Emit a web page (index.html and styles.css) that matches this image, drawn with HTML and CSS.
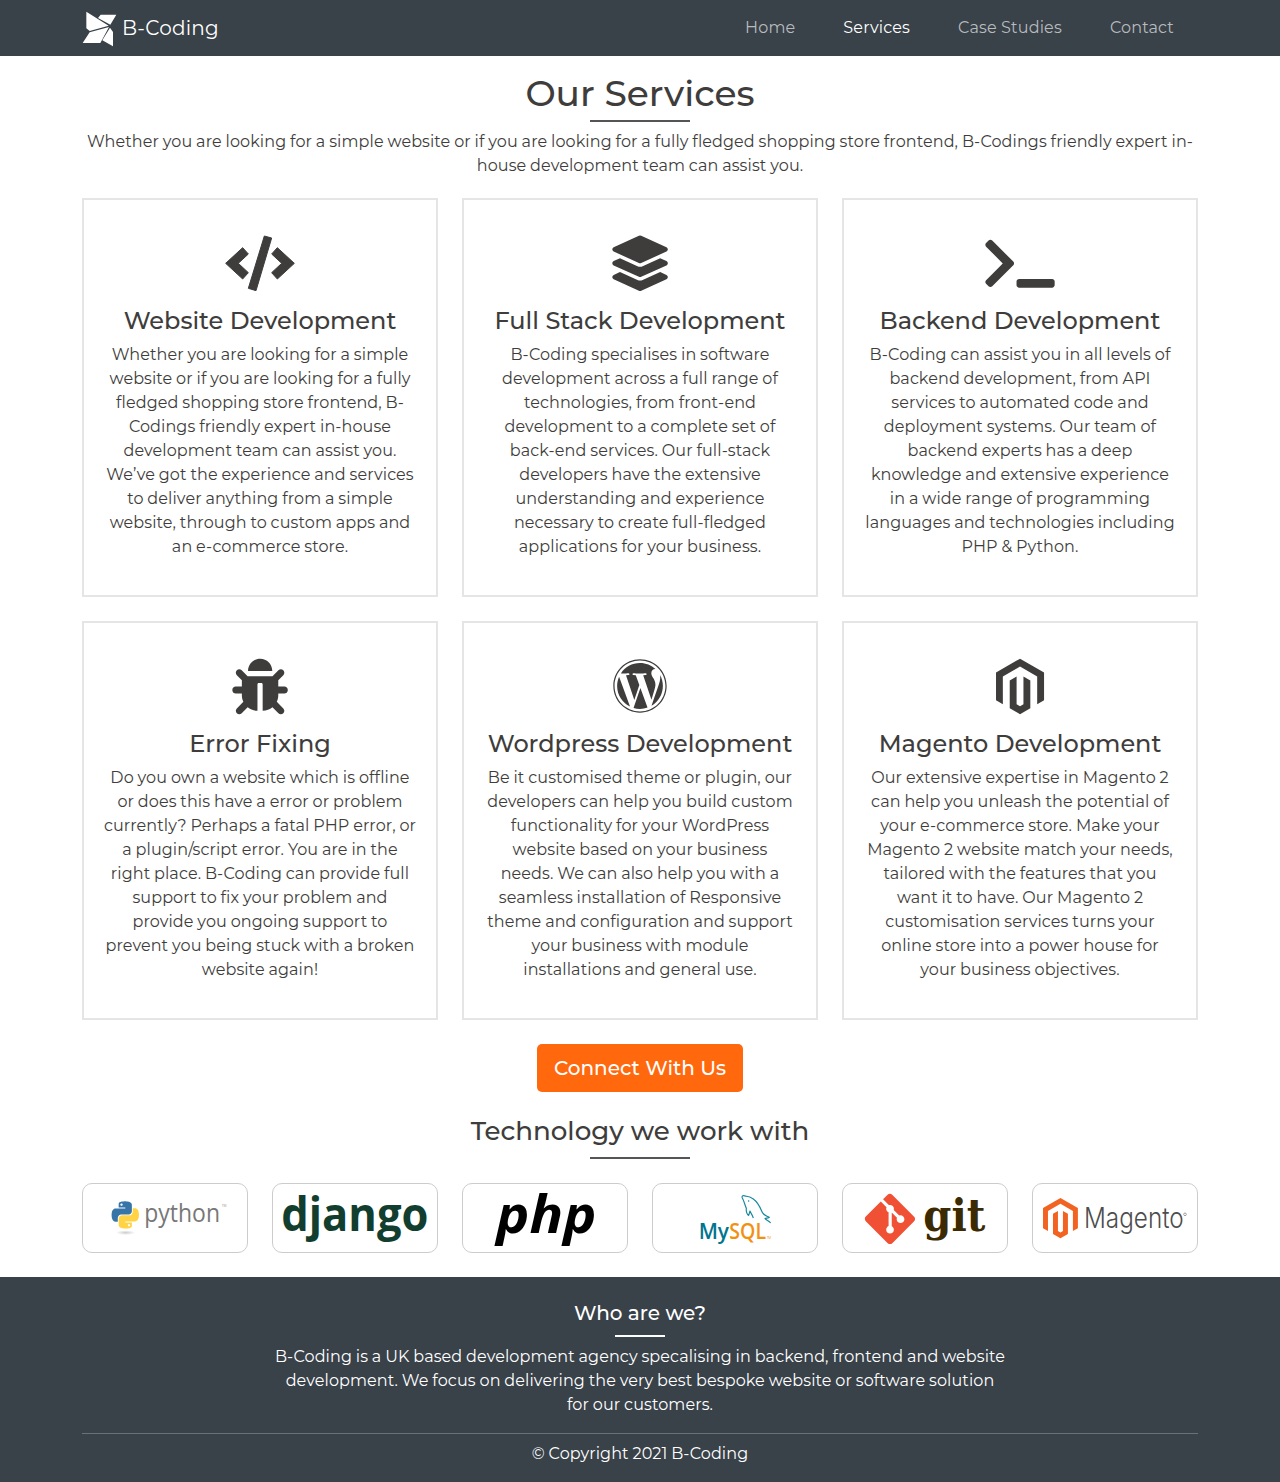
FILE: index.html
```html
<!DOCTYPE html>
<html lang="en">
<head>
<meta charset="utf-8">
<title>B-Coding | Services</title>
<link rel="stylesheet" href="styles.css">
</head>
<body>
<header class="navbar">
  <div class="container navbar-inner">
    <a class="brand">
      <svg class="brand-mark" viewBox="36 33 105 108"><path d="M49 35L116 77 59 93 49 85zM84 54L92 44H139L121 74zM38 129L59 97 117 81 91 129zM120 83L129 96V139L97 121z"/></svg>
      <span class="brand-name">B-Coding</span>
    </a>
    <nav class="menu"><a>Home</a><a class="active">Services</a><a>Case Studies</a><a>Contact</a></nav>
  </div>
</header>

<main class="container">
  <h1 class="page-title">Our Services</h1>
  <div class="rule"></div>
  <p class="intro">Whether you are looking for a simple website or if you are looking for a fully fledged shopping store frontend, B-Codings friendly expert in-<br>house development team can assist you.</p>

  <section class="services">
    <article class="card">
      <svg class="icon" viewBox="0 0 300 240"><path stroke="#3e3d3c" stroke-width="3" stroke-linejoin="round" d="M47 130L98 83 115 102 85 130 115 158 98 177zM253 130L202 83 185 102 215 130 185 158 202 177zM163 48L185 54 138 212 115 205z"/></svg>
      <h2>Website Development</h2>
      <p>Whether you are looking for a simple<br>website or if you are looking for a fully<br>fledged shopping store frontend, B-<br>Codings friendly expert in-house<br>development team can assist you.<br>We’ve got the experience and services<br>to deliver anything from a simple<br>website, through to custom apps and<br>an e-commerce store.</p>
    </article>
    <article class="card">
      <svg class="icon" viewBox="0 0 300 240"><path transform="translate(67 46.5) scale(.325)" d="M12.41 148.02l232.94 105.67c6.8 3.09 14.49 3.09 21.29 0l232.94-105.67c16.55-7.51 16.55-32.52 0-40.03L266.65 2.31a25.607 25.607 0 0 0-21.29 0L12.41 107.98c-16.55 7.51-16.55 32.53 0 40.04zm487.18 88.28l-58.09-26.33-161.64 73.27c-7.56 3.43-15.59 5.17-23.86 5.17s-16.29-1.74-23.86-5.17L70.51 209.97l-58.1 26.33c-16.55 7.5-16.55 32.5 0 40l232.94 105.59c6.8 3.08 14.49 3.08 21.29 0L499.59 276.3c16.55-7.5 16.55-32.5 0-40zm0 127.8l-57.87-26.23-161.86 73.37c-7.56 3.43-15.59 5.17-23.86 5.17s-16.29-1.74-23.86-5.17L70.29 337.87 12.41 364.1c-16.55 7.5-16.55 32.5 0 40l232.94 105.59c6.8 3.08 14.49 3.08 21.29 0L499.59 404.1c16.55-7.5 16.55-32.5 0-40z"/></svg>
      <h2>Full Stack Development</h2>
      <p>B-Coding specialises in software<br>development across a full range of<br>technologies, from front-end<br>development to a complete set of<br>back-end services. Our full-stack<br>developers have the extensive<br>understanding and experience<br>necessary to create full-fledged<br>applications for your business.</p>
    </article>
    <article class="card">
      <svg class="icon" viewBox="0 0 300 240"><path transform="translate(46 47) scale(.325)" d="M257.981 272.971L63.638 467.314c-9.373 9.373-24.569 9.373-33.941 0L7.029 444.647c-9.357-9.357-9.375-24.522-.04-33.901L161.011 256 6.99 101.255c-9.335-9.379-9.317-24.544.04-33.901l22.667-22.667c9.373-9.373 24.569-9.373 33.941 0L257.981 239.03c9.373 9.372 9.373 24.568 0 33.941zM640 456v-32c0-13.255-10.745-24-24-24H312c-13.255 0-24 10.745-24 24v32c0 13.255 10.745 24 24 24h304c13.255 0 24-10.745 24-24z"/></svg>
      <h2>Backend Development</h2>
      <p>B-Coding can assist you in all levels of<br>backend development, from API<br>services to automated code and<br>deployment systems. Our team of<br>backend experts has a deep<br>knowledge and extensive experience<br>in a wide range of programming<br>languages and technologies including<br>PHP &amp; Python.</p>
    </article>
    <article class="card">
      <svg class="icon" viewBox="0 -6 300 240"><path transform="translate(67 41.5) scale(.325)" d="M511.988 288.9c-.478 17.43-15.217 31.1-32.653 31.1H424v16c0 21.864-4.882 42.584-13.6 61.145l60.228 60.228c12.496 12.497 12.496 32.758 0 45.255-12.498 12.497-32.759 12.496-45.256 0l-54.736-54.736C345.886 467.965 314.351 480 280 480V236c0-6.627-5.373-12-12-12h-24c-6.627 0-12 5.373-12 12v244c-34.351 0-65.886-12.035-90.636-32.108l-54.736 54.736c-12.498 12.497-32.759 12.496-45.256 0-12.496-12.497-12.496-32.758 0-45.255l60.228-60.228C92.882 378.584 88 357.864 88 336v-16H32.666C15.23 320 .491 306.33.013 288.9-.484 270.816 14.028 256 32 256h56v-58.745l-46.628-46.628c-12.496-12.497-12.496-32.758 0-45.255 12.498-12.497 32.758-12.497 45.256 0L141.255 160h229.489l54.627-54.627c12.498-12.497 32.758-12.497 45.256 0 12.496 12.497 12.496 32.758 0 45.255L424 197.255V256h56c17.972 0 32.484 14.816 31.988 32.9zM257 0c-61.856 0-112 50.144-112 112h224C369 50.144 318.856 0 257 0z"/></svg>
      <h2>Error Fixing</h2>
      <p>Do you own a website which is offline<br>or does this have a error or problem<br>currently? Perhaps a fatal PHP error, or<br>a plugin/script error. You are in the<br>right place. B-Coding can provide full<br>support to fix your problem and<br>provide you ongoing support to<br>prevent you being stuck with a broken<br>website again!</p>
    </article>
    <article class="card">
      <svg class="icon" viewBox="0 -6 300 240"><path transform="translate(67.4 40.4) scale(.3226)" d="M61.7 169.4l101.5 278C92.2 413 43.3 340.2 43.3 256c0-30.9 6.6-60.1 18.4-86.6zm337.9 75.9c0-26.3-9.4-44.5-17.5-58.7-10.8-17.5-20.9-32.4-20.9-49.9 0-19.6 14.8-37.8 35.7-37.8.9 0 1.8.1 2.8.2-37.9-34.7-88.3-55.9-143.7-55.9-74.3 0-139.7 38.1-177.8 95.9 5 .2 9.7.3 13.7.3 22.2 0 56.7-2.7 56.7-2.7 11.5-.7 12.8 16.2 1.4 17.5 0 0-11.5 1.3-24.3 2l77.5 230.4L249.8 247l-33.1-90.8c-11.5-.7-22.3-2-22.3-2-11.5-.7-10.1-18.2 1.3-17.5 0 0 35.1 2.7 56 2.7 22.2 0 56.7-2.7 56.7-2.7 11.5-.7 12.8 16.2 1.4 17.5 0 0-11.5 1.3-24.3 2l76.9 228.7 21.2-70.9c9-29.4 16-50.5 16-68.7zm-139.9 29.3l-63.8 185.5c19.1 5.6 39.2 8.7 60.1 8.7 24.8 0 48.5-4.3 70.6-12.1-.6-.9-1.1-1.9-1.5-2.9l-65.4-179.2zm183-120.7c.9 6.8 1.4 14 1.4 21.9 0 21.6-4 45.8-16.2 76.2l-65 187.9C426.2 403 468.7 334.5 468.7 256c0-37-9.4-71.8-26-102.1zM504 256c0 136.8-111.3 248-248 248C119.2 504 8 392.7 8 256 8 119.2 119.2 8 256 8c136.7 0 248 111.2 248 248zm-11.4 0c0-130.5-106.2-236.6-236.6-236.6C125.5 19.4 19.4 125.5 19.4 256S125.6 492.6 256 492.6c130.5 0 236.6-106.1 236.6-236.6z"/></svg>
      <h2>Wordpress Development</h2>
      <p>Be it customised theme or plugin, our<br>developers can help you build custom<br>functionality for your WordPress<br>website based on your business<br>needs. We can also help you with a<br>seamless installation of Responsive<br>theme and configuration and support<br>your business with module<br>installations and general use.</p>
    </article>
    <article class="card">
      <svg class="icon" viewBox="0 -6 300 240"><path transform="translate(77.3 41) scale(.325)" d="M445.7 127.9V384l-63.4 36.5V164.7L223.8 73.1 65.2 164.7l.4 255.9L2.3 384V128.1L224.2 0l221.5 127.9zM255.6 420.5L224 438.9l-31.8-18.2v-256l-63.3 36.6.1 255.9 94.9 54.9 95.1-54.9v-256l-63.4-36.6v255.9z"/></svg>
      <h2>Magento Development</h2>
      <p>Our extensive expertise in Magento 2<br>can help you unleash the potential of<br>your e-commerce store. Make your<br>Magento 2 website match your needs,<br>tailored with the features that you<br>want it to have. Our Magento 2<br>customisation services turns your<br>online store into a power house for<br>your business objectives.</p>
    </article>
  </section>

  <div class="cta"><a class="button">Connect With Us</a></div>

  <h2 class="tech-title">Technology we work with</h2>
  <div class="rule"></div>

  <section class="tech">
    <div class="logo"><svg viewBox="39 27 492 204">
      <defs>
        <radialGradient id="shade"><stop offset="0" stop-color="#ccc"/><stop offset="1" stop-color="#fff"/></radialGradient>
        <path id="snake" d="M14.25.18l.9.2.73.26.59.3.45.32.34.34.25.34.16.33.1.3.04.26.02.2-.01.13V8.5l-.05.63-.13.55-.21.46-.26.38-.3.31-.33.25-.35.19-.35.14-.33.1-.3.07-.26.04-.21.02H8.77l-.69.05-.59.14-.5.22-.41.27-.33.32-.27.35-.2.36-.15.37-.1.35-.07.32-.04.27-.02.21v3.06H3.17l-.21-.03-.28-.07-.32-.12-.35-.18-.36-.26-.36-.36-.35-.46-.32-.59-.28-.73-.21-.88-.14-1.05-.05-1.23.06-1.22.16-1.04.24-.87.32-.71.36-.57.4-.44.42-.33.42-.24.4-.16.36-.1.32-.05.24-.01h.16l.06.01h8.16v-.83H6.18l-.01-2.75-.02-.37.05-.34.11-.31.17-.28.25-.26.31-.23.38-.2.44-.18.51-.15.58-.12.64-.1.71-.06.77-.04.84-.02 1.27.05zm-6.3 1.98l-.23.33-.08.41.08.41.23.34.33.22.41.09.41-.09.33-.22.23-.34.08-.41-.08-.41-.23-.33-.33-.22-.41-.09-.41.09z"/>
      </defs>
      <ellipse cx="167" cy="173" rx="29" ry="7" fill="url(#shade)"/>
      <g transform="translate(125 79) scale(3.4)"><use href="#snake" fill="#3774a8"/><use href="#snake" fill="#ffd343" transform="rotate(180 12 12)"/></g>
      <text class="word-python" x="223" y="141" textLength="227" lengthAdjust="spacingAndGlyphs">python</text>
      <text class="word-python-tm" x="455" y="95">TM</text>
    </svg></div>
    <div class="logo"><svg viewBox="609 27 492 204">
      <text class="word-django" x="634" y="168" textLength="441" lengthAdjust="spacingAndGlyphs">django</text>
    </svg></div>
    <div class="logo"><svg viewBox="39 27 492 204">
      <text class="word-php" x="139" y="174" textLength="300" lengthAdjust="spacingAndGlyphs">php</text>
    </svg></div>
    <div class="logo"><svg viewBox="609 27 492 204">
      <path class="dolphin" d="M910 129C906 117 903 116 900 108L896 121C890 119 888 107 889 100C884 88 882 78 877 69C874 62 880 60 888 64C895 63 903 67 910 72C924 82 930 96 935 108C938 118 947 123 958 127C957 130 947 129 945 131C950 136 957 138 962 144"/>
      <circle cx="896" cy="78" r="2" fill="#00758f"/>
      <text class="word-my" x="746" y="193" textLength="91" lengthAdjust="spacingAndGlyphs">My</text>
      <text class="word-sql" x="838" y="193" textLength="110" lengthAdjust="spacingAndGlyphs">SQL</text>
      <text class="word-sql-tm" x="950" y="193">TM</text>
    </svg></div>
    <div class="logo"><svg viewBox="39 27 492 204">
      <path fill="#f05033" transform="translate(104.5 56.5) scale(6.28)" d="M23.546 10.93L13.067.452c-.604-.603-1.582-.603-2.188 0L8.708 2.627l2.76 2.76c.645-.215 1.379-.07 1.889.441.516.515.658 1.258.438 1.9l2.658 2.66c.645-.223 1.387-.078 1.9.435.721.72.721 1.884 0 2.604-.719.719-1.881.719-2.6 0-.539-.541-.674-1.337-.404-1.996L12.86 8.955v6.525c.176.086.342.203.488.348.713.721.713 1.883 0 2.6-.719.721-1.889.721-2.609 0-.719-.719-.719-1.879 0-2.598.182-.18.387-.316.605-.406V8.835c-.217-.091-.424-.222-.6-.401-.545-.545-.676-1.342-.396-2.009L7.636 3.7.45 10.881c-.6.605-.6 1.584 0 2.189l10.48 10.477c.604.604 1.582.604 2.186 0l10.43-10.43c.605-.603.605-1.582 0-2.187"/>
      <text class="word-git" x="280" y="168" textLength="186" lengthAdjust="spacingAndGlyphs">git</text>
    </svg></div>
    <div class="logo"><svg viewBox="609 27 492 204">
      <path fill="#f26322" transform="translate(638.5 69) scale(.236)" d="M445.7 127.9V384l-63.4 36.5V164.7L223.8 73.1 65.2 164.7l.4 255.9L2.3 384V128.1L224.2 0l221.5 127.9zM255.6 420.5L224 438.9l-31.8-18.2v-256l-63.3 36.6.1 255.9 94.9 54.9 95.1-54.9v-256l-63.4-36.6v255.9z"/>
      <text class="word-magento" x="762" y="159" textLength="299" lengthAdjust="spacingAndGlyphs">Magento</text>
      <circle cx="1065" cy="118" r="4" fill="none" stroke="#777" stroke-width="2"/>
    </svg></div>
  </section>
</main>

<footer class="footer">
  <div class="container">
    <h2 class="footer-title">Who are we?</h2>
    <div class="rule rule-light"></div>
    <p class="about">B-Coding is a UK based development agency specalising in backend, frontend and website<br>development. We focus on delivering the very best bespoke website or software solution<br>for our customers.</p>
    <p class="copyright">© Copyright 2021 B-Coding</p>
  </div>
</footer>
</body>
</html>
```
FILE: styles.css
```css
* { box-sizing: border-box; }
body {
  margin: 0;
  background: #fff;
  color: #3e3d3c;
  font-family: Montserrat, Inter, sans-serif;
  font-size: 16px;
  line-height: 24px;
}
h1, h2, p { margin: 0; }
h1, h2 { font-weight: 500; }
p { letter-spacing: .1px; word-spacing: -.5px; }
.container { width: 1116px; margin: 0 auto; }

.navbar { height: 56px; background: #394149; }
.navbar-inner { display: flex; align-items: center; justify-content: space-between; height: 56px; }
.brand { display: flex; align-items: center; gap: 5px; color: #fff; }
.brand-mark { width: 35px; height: 36px; fill: #fff; margin-top: 2px; }
.brand-name { font-size: 20px; letter-spacing: .2px; }
.menu { display: flex; gap: 48px; padding-right: 24px; color: #b8bbbe; letter-spacing: .15px; }
.menu .active { color: #fff; }

main { text-align: center; }
.page-title { padding-top: 15px; font-size: 36px; line-height: 45px; }
.rule { width: 100px; height: 2px; margin: 4px auto 0; background: #555; }
.intro { margin-top: 8px; }

.services { display: grid; grid-template-columns: repeat(3, 1fr); gap: 24px; margin-top: 20px; }
.card { height: 399px; padding-top: 20px; border: 2px solid #e5e5e5; white-space: nowrap; }
.icon { display: block; width: 100px; height: 80px; margin: 0 auto; fill: #3e3d3c; }
.card h2 { margin: 6px 0 8px; font-size: 24px; line-height: 29px; }

.cta { display: flex; justify-content: center; margin-top: 24px; }
.button {
  width: 206px; height: 48px; border-radius: 5px; background: #ff680d;
  color: #fff; font-size: 20px; font-weight: 500; line-height: 48px;
}
.tech-title { margin-top: 22px; font-size: 26.1px; line-height: 34px; }
.tech-title + .rule { margin-top: 9px; }
.tech { display: grid; grid-template-columns: repeat(6, 1fr); gap: 24px; margin: 24px 0; }
.logo { height: 70px; border: 1px solid #ccc; border-radius: 10px; }
.logo svg { display: block; width: 164px; height: 68px; overflow: visible; }
.word-python { font: 400 78px "Open Sans", sans-serif; fill: #777; }
.word-python-tm { font: 400 10px "Open Sans", sans-serif; fill: #999; }
.word-django { font: 700 141px "Open Sans", sans-serif; fill: #113e2e; }
.word-php { font: italic 700 154px "Open Sans", sans-serif; }
.word-my { font: 600 67px "Open Sans", sans-serif; fill: #00758f; }
.word-sql { font: 600 67px "Open Sans", sans-serif; fill: #f29111; }
.word-sql-tm { font: 400 9px "Open Sans", sans-serif; fill: #f29111; }
.word-git { font: 700 137px "DejaVu Serif", serif; fill: #3b2a02; }
.word-magento { font: 300 84px Inter, sans-serif; fill: #4d4d4d; }
.dolphin { fill: none; stroke: #17879e; stroke-width: 3.5; stroke-linejoin: round; }

.footer { height: 205px; padding-top: 21px; background: #394149; color: #fff; text-align: center; }
.footer-title { font-size: 20px; line-height: 30px; }
.rule-light { width: 50px; margin-top: 7px; background: #fff; }
.about { margin-top: 8px; }
.copyright { margin-top: 16px; padding-top: 8px; border-top: 1px solid #6a7076; }
```
